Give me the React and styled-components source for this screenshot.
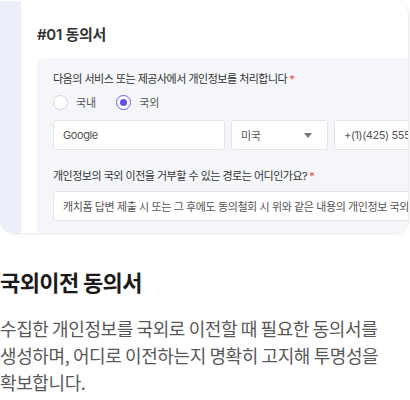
import React from "react";
import styled, { createGlobalStyle } from "styled-components";

const GlobalStyle = createGlobalStyle`
  body {
    margin: 0;
    background: #fff;
    font-family: "Inter", "Noto Sans CJK KR", sans-serif;
  }
`;

const Page = styled.div`
  width: 410px;
  height: 400px;
  overflow: hidden;
  padding-top: 1px;
  box-sizing: border-box;
`;

const Card = styled.div`
  display: flex;
  width: 409px;
  height: 233px;
  border: 1px solid #ececf0;
  border-top: none;
  border-radius: 0 14px 14px 14px;
  overflow: hidden;
  box-sizing: border-box;
  box-shadow: 0 1px 3px rgba(0, 0, 0, 0.04);
`;

const SideStrip = styled.div`
  width: 20px;
  flex-shrink: 0;
  background: #eceef9;
`;

const Content = styled.div`
  flex: 1;
  min-width: 0;
  background: #fff;
  padding: 24px 0 0 16px;
  display: flex;
  flex-direction: column;
`;

const FormTitle = styled.h3`
  margin: 0 0 13px;
  font-size: 15px;
  font-weight: 600;
  color: #333;
  line-height: 20px;
  letter-spacing: -0.3px;
`;

const Panel = styled.div`
  flex: 1;
  background: #f5f6f9;
  border-top-left-radius: 8px;
  padding: 13px 0 0 16px;
  display: flex;
  flex-direction: column;
  overflow: hidden;
`;

const Label = styled.div`
  font-size: 11px;
  color: #333;
  line-height: 16px;
  letter-spacing: -0.5px;
  white-space: nowrap;
  margin-bottom: ${(p) => p.$gap || 0}px;
  span {
    color: #f0453a;
    margin-left: 2px;
  }
`;

const RadioRow = styled.div`
  display: flex;
  gap: 20px;
  margin: 7px 0 10px;
`;

const RadioItem = styled.label`
  display: flex;
  align-items: center;
  gap: 8px;
  font-size: 11px;
  color: #555;
`;

const RadioCircle = styled.span`
  width: 15px;
  height: 15px;
  border-radius: 50%;
  box-sizing: border-box;
  background: #fff;
  border: 1px solid ${(p) => (p.$checked ? "#6c5ce7" : "#d4d6dc")};
  display: flex;
  align-items: center;
  justify-content: center;
  &::after {
    content: "";
    width: 7px;
    height: 7px;
    border-radius: 50%;
    background: ${(p) => (p.$checked ? "#6250f0" : "transparent")};
  }
`;

const InputRow = styled.div`
  display: flex;
  gap: 6px;
  margin-bottom: 18px;
`;

const Field = styled.div`
  width: ${(p) => p.$w}px;
  flex-shrink: 0;
  height: 30px;
  box-sizing: border-box;
  background: #fff;
  border: 1px solid #e2e4e9;
  border-radius: 3px;
  padding: 0 9px;
  display: flex;
  align-items: center;
  justify-content: space-between;
  font-size: 11px;
  letter-spacing: -0.4px;
  color: #555;
  white-space: nowrap;
  overflow: hidden;
`;

const Caret = styled.span`
  width: 0;
  height: 0;
  border-left: 4.5px solid transparent;
  border-right: 4.5px solid transparent;
  border-top: 5px solid #777;
  margin-right: 6px;
`;

const Heading = styled.h2`
  margin: 32px 0 0;
  font-family: "Noto Sans CJK KR", sans-serif;
  font-size: 22px;
  font-weight: 700;
  color: #1b1b1b;
  line-height: 30px;
  letter-spacing: -0.6px;
`;

const Description = styled.p`
  margin: 19px 0 0;
  font-family: "Noto Sans CJK KR", sans-serif;
  font-size: 18px;
  font-weight: 400;
  color: #585858;
  line-height: 27px;
  letter-spacing: -0.4px;
  white-space: nowrap;
`;

export default function App() {
  return (
    <Page>
      <GlobalStyle />
      <Card>
        <SideStrip />
        <Content>
          <FormTitle>#01 동의서</FormTitle>
          <Panel>
            <Label>
              다음의 서비스 또는 제공사에서 개인정보를 처리합니다<span>*</span>
            </Label>
            <RadioRow>
              <RadioItem>
                <RadioCircle />
                국내
              </RadioItem>
              <RadioItem>
                <RadioCircle $checked />
                국외
              </RadioItem>
            </RadioRow>
            <InputRow>
              <Field $w={172}>Google</Field>
              <Field $w={97}>
                미국
                <Caret />
              </Field>
              <Field $w={120}>+(1)(425) 555-0100</Field>
            </InputRow>
            <Label $gap={7}>
              개인정보의 국외 이전을 거부할 수 있는 경로는 어디인가요?<span>*</span>
            </Label>
            <Field $w={400}>
              캐치폼 답변 제출 시 또는 그 후에도 동의철회 시 위와 같은 내용의 개인정보 국외이전을 거부할 수 있습니다.
            </Field>
          </Panel>
        </Content>
      </Card>
      <Heading>국외이전 동의서</Heading>
      <Description>
        수집한 개인정보를 국외로 이전할 때 필요한 동의서를
        <br />
        생성하며, 어디로 이전하는지 명확히 고지해 투명성을
        <br />
        확보합니다.
      </Description>
    </Page>
  );
}
